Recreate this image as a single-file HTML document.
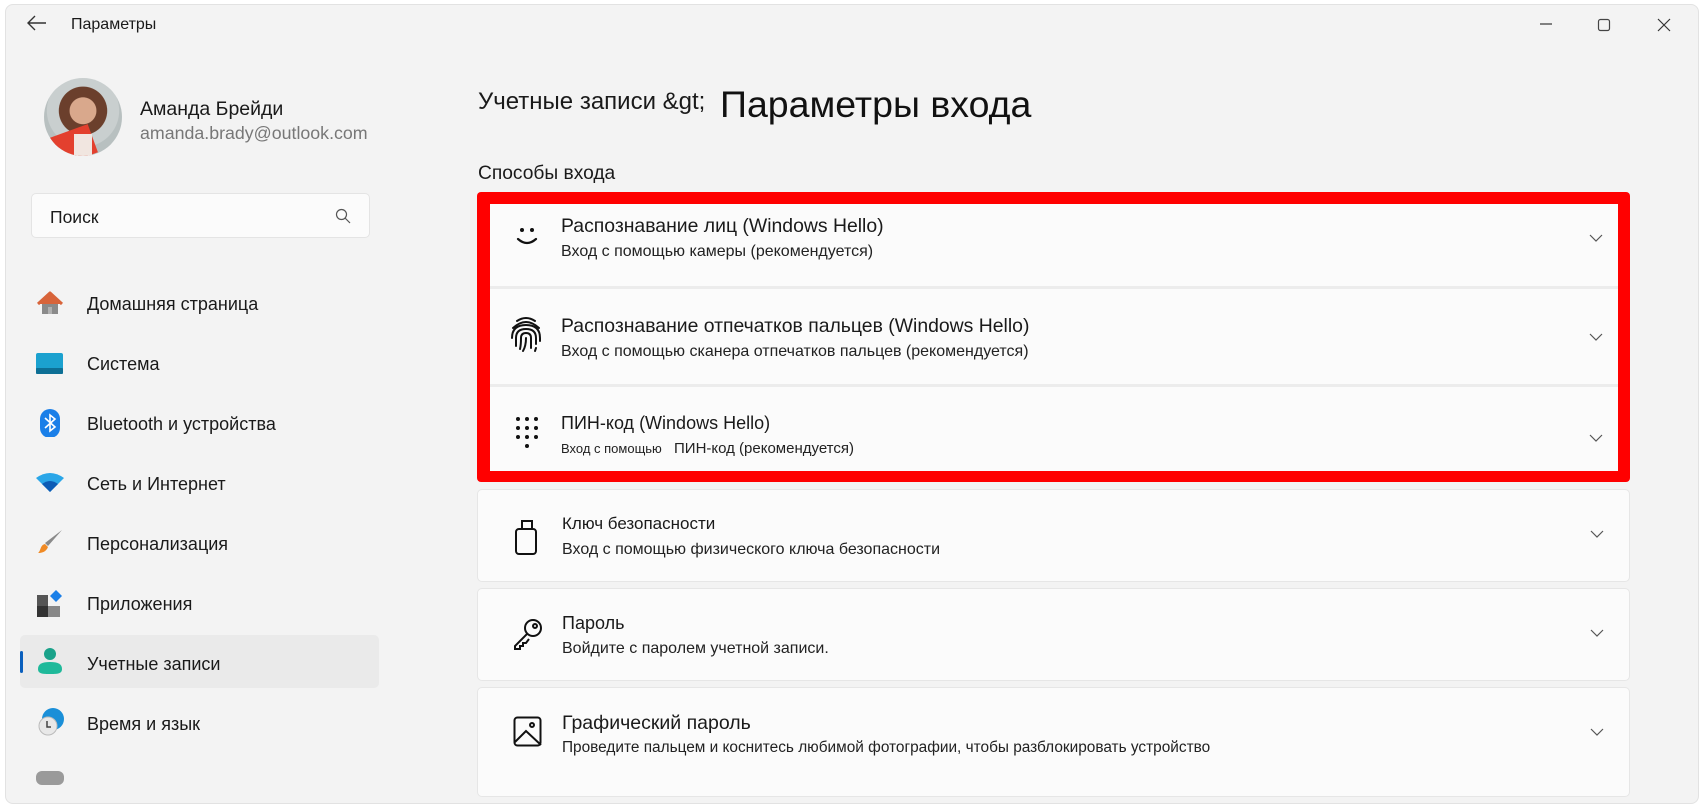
<!DOCTYPE html>
<html><head><meta charset="utf-8"><style>
*{margin:0;padding:0;box-sizing:border-box}
body{width:1704px;height:779px;background:#fff;font-family:"Liberation Sans",sans-serif;color:#1a1a1a;position:relative;overflow:hidden}
.win{position:absolute;left:5px;top:4px;width:1694px;height:800px;background:#f3f3f3;border:1px solid #e2e2e2;border-radius:8px}
.a{position:absolute;white-space:nowrap}
.nav{position:absolute;left:87px;font-size:18px;color:#1a1a1a}
.ic{position:absolute;left:36px;width:28px;height:28px}
.card{position:absolute;left:477px;width:1153px;background:#fbfbfb;border:1px solid #e6e6e6;border-radius:5px}
.t{position:absolute;left:84px;font-size:18px;color:#1a1a1a}
.s{position:absolute;left:84px;font-size:16px;color:#222}
.chev{position:absolute;left:1112px;width:14px;height:8px}
</style></head><body>
<div class="win"></div>
<svg class="a" style="left:27px;top:15px" width="20" height="16" viewBox="0 0 20 16"><path d="M19 8H2M8 1L1 8l7 7" fill="none" stroke="#333" stroke-width="1.4"/></svg>
<div class="a" style="left:71px;top:16px;font-size:16px">Параметры</div>
<svg class="a" style="left:1538px;top:18px" width="140" height="14"><path d="M2 6h12" stroke="#333" stroke-width="1.2"/><rect x="60.5" y="1.5" width="11" height="11" rx="2" fill="none" stroke="#444" stroke-width="1.2"/><path d="M120 1l12 12M132 1l-12 12" stroke="#333" stroke-width="1.2"/></svg>

<div class="a" style="left:44px;top:78px;width:78px;height:78px;border-radius:50%;background:radial-gradient(circle at 50% 42%,#d9a88c 0 22%,#6b3f2c 23% 40%,#c9cfcf 41% 60%,#b8c0c0 61%);overflow:hidden"><div style="position:absolute;left:10px;top:52px;width:40px;height:30px;background:#e3402e;transform:rotate(-20deg)"></div><div style="position:absolute;left:30px;top:56px;width:18px;height:26px;background:#f1e6e0"></div></div>
<div class="a" style="left:140px;top:98px;font-size:19.5px">Аманда Брейди</div>
<div class="a" style="left:140px;top:123px;font-size:17.8px;color:#777">amanda.brady@outlook.com</div>
<div class="a" style="left:31px;top:193px;width:339px;height:45px;background:#fbfbfb;border:1px solid #e4e4e4;border-radius:5px"></div>
<div class="a" style="left:50px;top:207px;font-size:17.5px">Поиск</div>
<svg class="a" style="left:335px;top:208px" width="16" height="16"><circle cx="6.5" cy="6.5" r="5" fill="none" stroke="#555" stroke-width="1.2"/><path d="M10 10l5 5" stroke="#555" stroke-width="1.2"/></svg>

<div class="a" style="left:20px;top:635px;width:359px;height:53px;background:#eaeaea;border-radius:5px"></div>
<div class="a" style="left:20px;top:651px;width:3px;height:22px;background:#0a5fbd;border-radius:2px"></div>

<svg class="ic" style="top:290px" viewBox="0 0 28 28"><path d="M2 14L14 3l12 11" fill="#d8643a" stroke="#d8643a" stroke-width="3" stroke-linejoin="round"/><rect x="6" y="14" width="16" height="10" fill="#8a8a8a"/><rect x="12" y="17" width="4" height="7" fill="#b0b0b0"/></svg>
<div class="nav" style="top:294px">Домашняя страница</div>
<svg class="ic" style="top:350px" viewBox="0 0 28 28"><rect x="0" y="3" width="27" height="21" rx="2" fill="#1ba1cf"/><rect x="0" y="18" width="27" height="6" rx="1" fill="#0d6f95"/></svg>
<div class="nav" style="top:354px">Система</div>
<svg class="ic" style="top:409px" viewBox="0 0 28 28"><rect x="4" y="0" width="20" height="29" rx="10" fill="#1a7fe8"/><path d="M9 9l10 9-5 4V6l5 4-10 9" fill="none" stroke="#fff" stroke-width="1.6"/></svg>
<div class="nav" style="top:414px">Bluetooth и устройства</div>
<svg class="ic" style="top:470px" viewBox="0 0 28 28"><path d="M0 8Q14-2 28 8L14 22z" fill="#2aa6e8"/><path d="M6 14Q14 8 22 14L14 22z" fill="#0c5bb5"/></svg>
<div class="nav" style="top:474px">Сеть и Интернет</div>
<svg class="ic" style="top:528px" viewBox="0 0 28 28"><path d="M26 2L12 18l-3-3z" fill="#8a8a8a"/><path d="M9 16l3 3c-2 5-6 6-10 6 3-2 2-8 7-9z" fill="#f08a24"/></svg>
<div class="nav" style="top:534px">Персонализация</div>
<svg class="ic" style="top:590px" viewBox="0 0 28 28"><rect x="1" y="5" width="11" height="11" fill="#555"/><rect x="1" y="16" width="11" height="11" fill="#333"/><rect x="12" y="16" width="12" height="11" fill="#888"/><path d="M20 0l6 6-6 6-6-6z" fill="#1a7fe8"/></svg>
<div class="nav" style="top:594px">Приложения</div>
<svg class="ic" style="top:647px" viewBox="0 0 28 28"><circle cx="14" cy="7" r="6" fill="#1aa28a"/><path d="M2 22c0-5 4-7 12-7s12 2 12 7-5 5-12 5S2 27 2 22z" fill="#1fb99a"/></svg>
<div class="nav" style="top:654px">Учетные записи</div>
<svg class="ic" style="top:708px" viewBox="0 0 28 28"><circle cx="17" cy="11" r="11" fill="#1a8fd8"/><circle cx="12" cy="18" r="9" fill="#e8e8e8" stroke="#bbb"/><path d="M11 13v6h4" fill="none" stroke="#444" stroke-width="1.5"/></svg>
<div class="nav" style="top:714px">Время и язык</div>
<div class="a" style="left:36px;top:771px;width:28px;height:14px;border-radius:6px;background:#9a9a9a"></div>

<div class="a" style="left:478px;top:88px;font-size:24px">Учетные записи &amp;gt;</div>
<div class="a" style="left:720px;top:83px;font-size:37.5px;color:#111">Параметры входа</div>
<div class="a" style="left:478px;top:163px;font-size:19.2px">Способы входа</div>

<div class="a" style="left:477px;top:192px;width:1153px;height:290px;background:#ff0000;border-radius:4px"></div>
<div class="a" style="left:490px;top:204px;width:1128px;height:267px;background:#ececec"></div>
<div class="a" style="left:490px;top:204px;width:1128px;height:82px;background:#fbfbfb"></div>
<div class="a" style="left:490px;top:289px;width:1128px;height:95px;background:#fbfbfb"></div>
<div class="a" style="left:490px;top:387px;width:1128px;height:84px;background:#fbfbfb"></div>

<div class="a" style="left:477px;top:0;width:1153px;height:779px">
<svg class="a" style="left:36px;top:224px" width="28" height="24"><circle cx="9" cy="6" r="2" fill="#111"/><circle cx="19" cy="6" r="2" fill="#111"/><path d="M5 15q9 8 18 0" fill="none" stroke="#111" stroke-width="2.2" stroke-linecap="round"/></svg>
<div class="t" style="top:215px;font-size:19.4px">Распознавание лиц (Windows Hello)</div>
<div class="s" style="top:243px">Вход с помощью камеры (рекомендуется)</div>
<svg class="chev" style="top:234px"><path d="M1 1l6 6 6-6" fill="none" stroke="#555" stroke-width="1.2"/></svg>

<svg class="a" style="left:32px;top:316px" width="34" height="38" viewBox="0 0 34 38" fill="none" stroke="#111" stroke-width="2" stroke-linecap="round"><path d="M8 5q9-6 18 0"/><path d="M4 12q13-12 26 0"/><path d="M3 22q0-13 14-13t14 13v3"/><path d="M7 30q0-3 0-8q0-9 10-9t10 9v6"/><path d="M11 33q1-4 1-11q0-5 5-5t5 5v10"/><path d="M17 22q0 8-3 13"/><path d="M27 32l-1 3"/></svg>
<div class="t" style="top:315px;font-size:19.4px">Распознавание отпечатков пальцев (Windows Hello)</div>
<div class="s" style="top:343px">Вход с помощью сканера отпечатков пальцев (рекомендуется)</div>
<svg class="chev" style="top:333px"><path d="M1 1l6 6 6-6" fill="none" stroke="#555" stroke-width="1.2"/></svg>

<svg class="a" style="left:38px;top:416px" width="26" height="36" fill="#111"><circle cx="3" cy="3" r="2"/><circle cx="12" cy="3" r="2"/><circle cx="21" cy="3" r="2"/><circle cx="3" cy="12" r="2"/><circle cx="12" cy="12" r="2"/><circle cx="21" cy="12" r="2"/><circle cx="3" cy="21" r="2"/><circle cx="12" cy="21" r="2"/><circle cx="21" cy="21" r="2"/><circle cx="12" cy="30" r="2"/></svg>
<div class="t" style="top:413px">ПИН-код (Windows Hello)</div>
<div class="s" style="top:441px;font-size:13px">Вход с помощью</div>
<div class="s" style="top:440px;left:197px;font-size:15px">ПИН-код (рекомендуется)</div>
<svg class="chev" style="top:434px"><path d="M1 1l6 6 6-6" fill="none" stroke="#555" stroke-width="1.2"/></svg>
</div>

<div class="card" style="top:489px;height:93px"><svg class="a" style="left:36px;top:30px" width="26" height="36" fill="none" stroke="#111" stroke-width="2"><rect x="8" y="1" width="10" height="8"/><rect x="2" y="9" width="20" height="25" rx="3"/></svg><div class="t" style="top:24px;font-size:17px">Ключ безопасности</div><div class="s" style="top:51px">Вход с помощью физического ключа безопасности</div><svg class="chev" style="top:40px"><path d="M1 1l6 6 6-6" fill="none" stroke="#555" stroke-width="1.2"/></svg></div>
<div class="card" style="top:588px;height:93px"><svg class="a" style="left:34px;top:28px" width="32" height="34" fill="none" stroke="#111" stroke-width="2"><circle cx="21" cy="11" r="8"/><circle cx="23" cy="9" r="2"/><path d="M15 17L3 29v3h5v-3h3v-3h3l3-4"/></svg><div class="t" style="top:24px">Пароль</div><div class="s" style="top:51px">Войдите с паролем учетной записи.</div><svg class="chev" style="top:40px"><path d="M1 1l6 6 6-6" fill="none" stroke="#555" stroke-width="1.2"/></svg></div>
<div class="card" style="top:687px;height:110px"><svg class="a" style="left:35px;top:28px" width="30" height="32" fill="none" stroke="#111" stroke-width="2"><rect x="1.5" y="1.5" width="26" height="28" rx="3"/><circle cx="19" cy="9" r="2"/><path d="M2 26l11-11 15 14"/></svg><div class="t" style="top:24px;font-size:19.5px">Графический пароль</div><div class="s" style="top:51px;font-size:15.4px">Проведите пальцем и коснитесь любимой фотографии, чтобы разблокировать устройство</div><svg class="chev" style="top:40px"><path d="M1 1l6 6 6-6" fill="none" stroke="#555" stroke-width="1.2"/></svg></div>
</body></html>
